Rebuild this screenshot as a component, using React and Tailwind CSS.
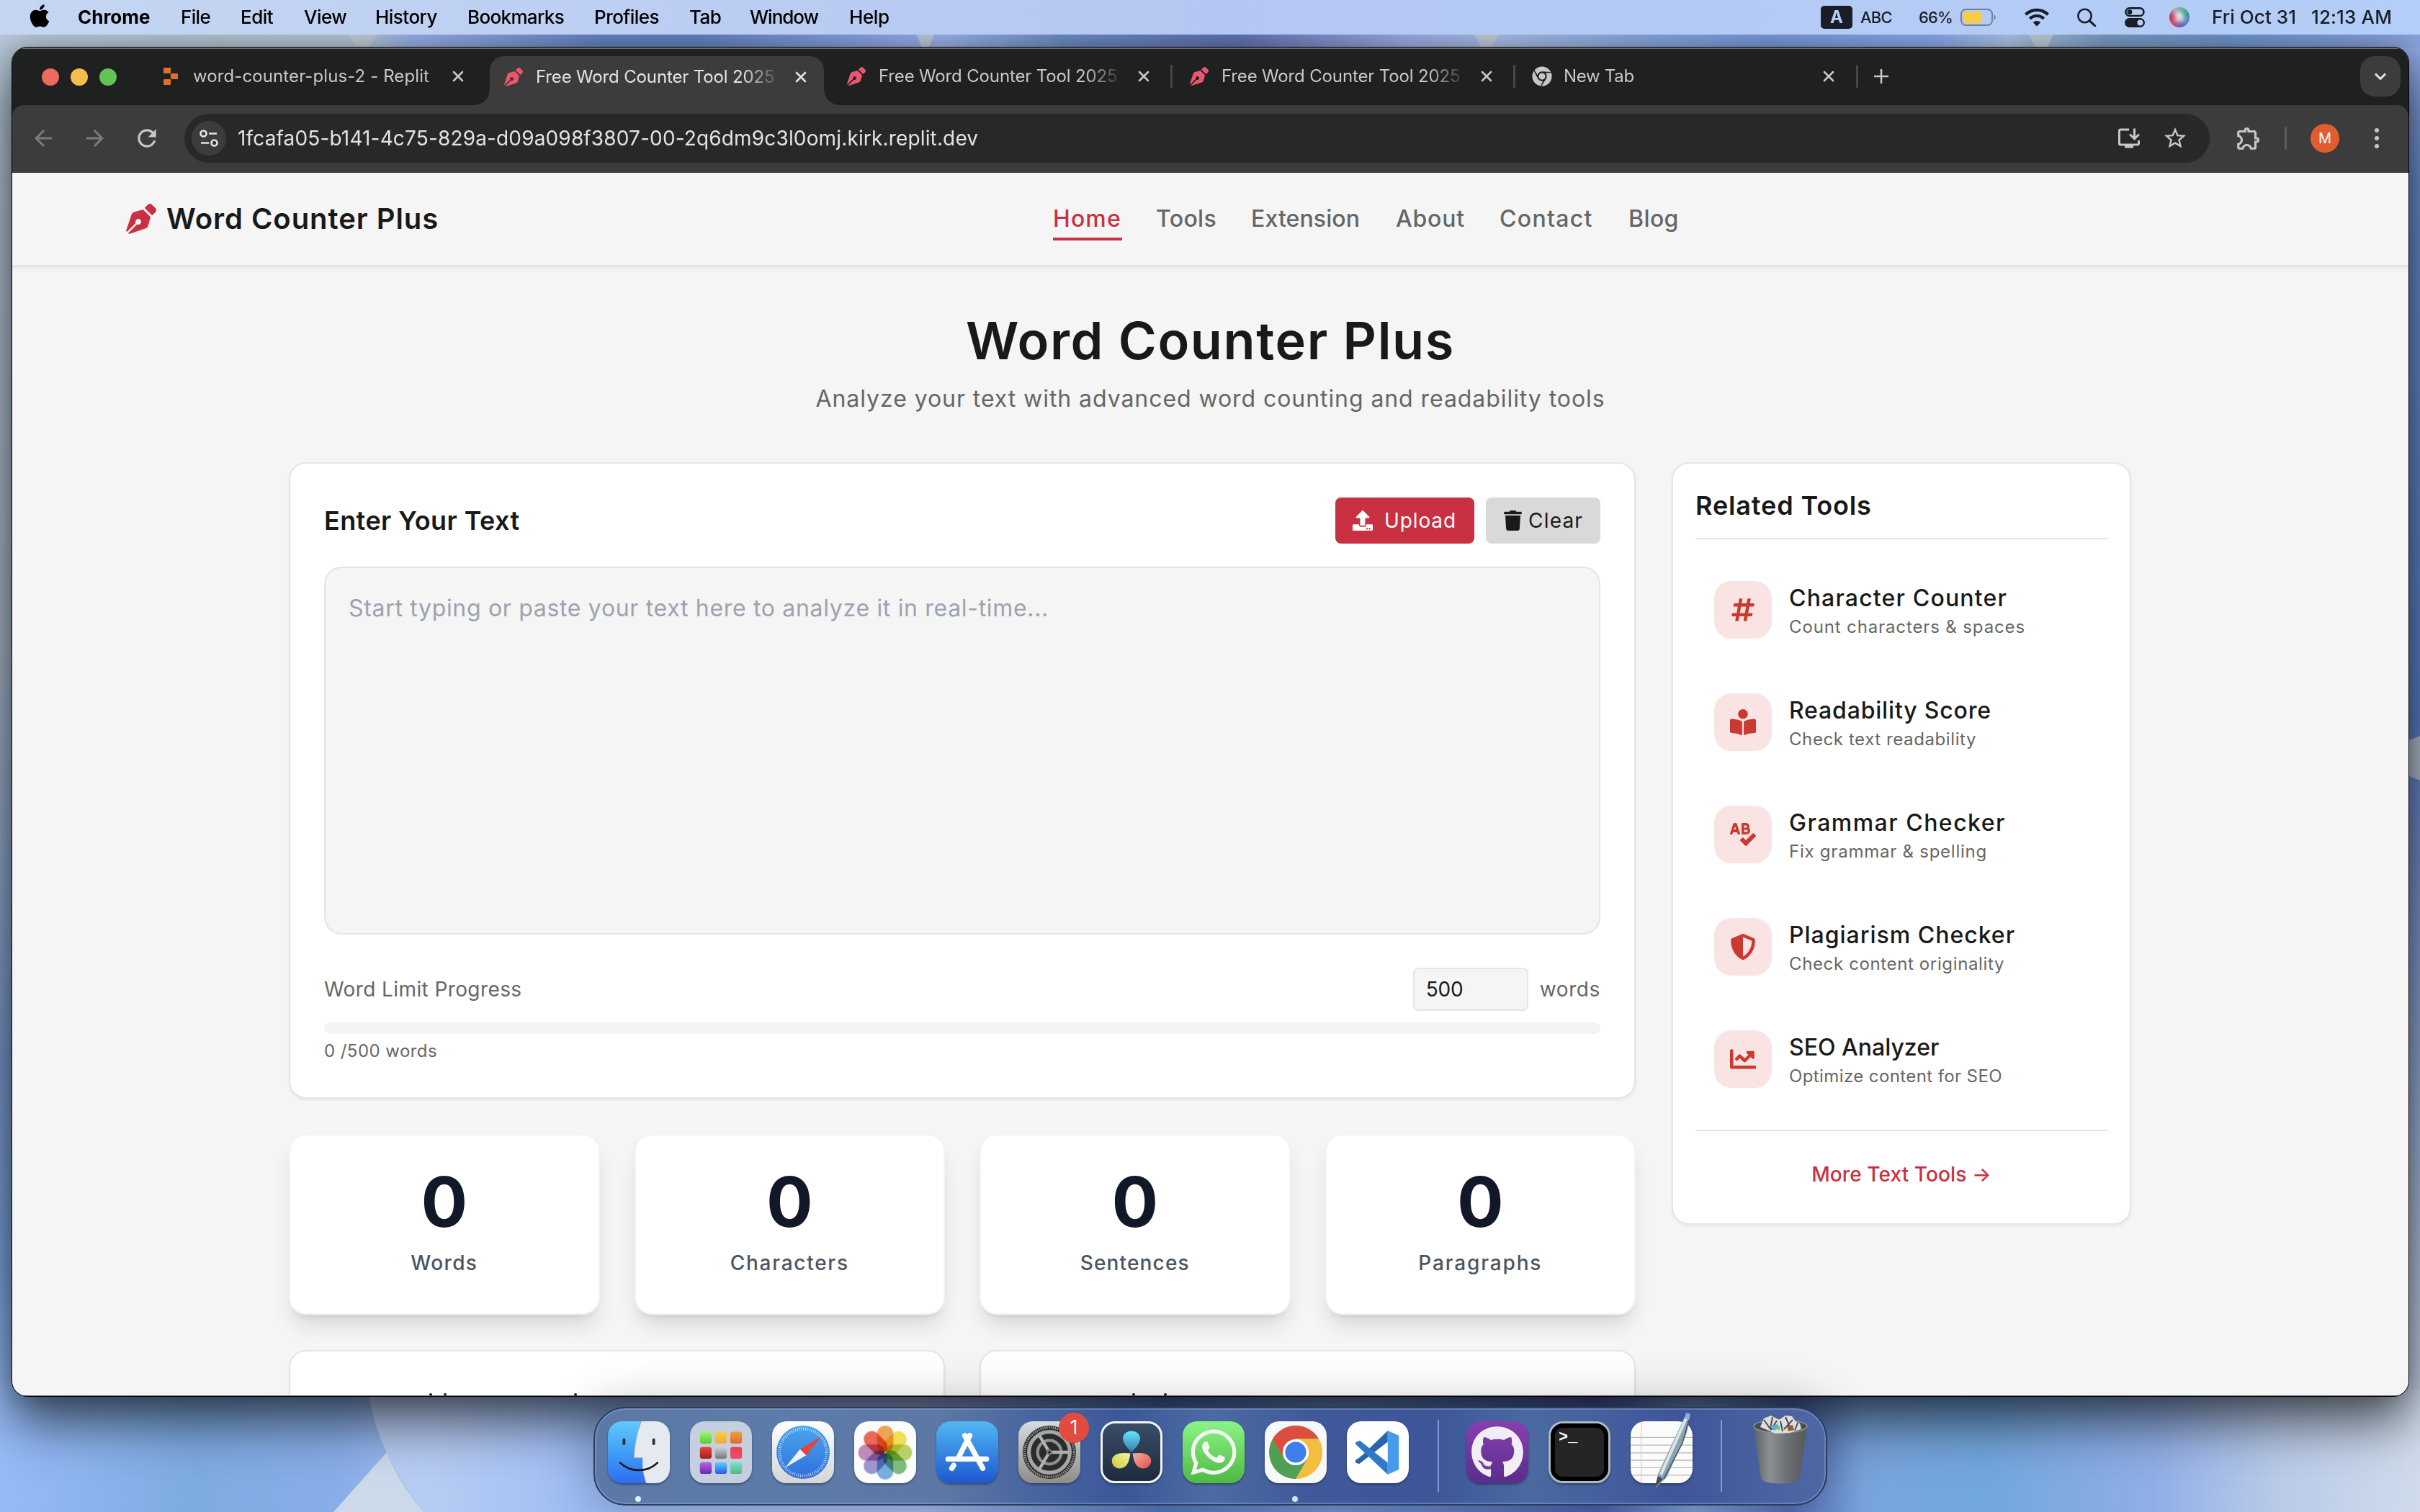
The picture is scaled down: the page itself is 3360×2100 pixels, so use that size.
import React from "react";
import { FaApple, FaBookReader, FaChartLine, FaChrome, FaGithub, FaHashtag, FaPenNib, FaShieldAlt, FaSpellCheck, FaTrash, FaUpload, FaWhatsapp } from "react-icons/fa";
import { MdArrowBack, MdArrowForward, MdOutlineExtension, MdOutlineInstallDesktop, MdRefresh, MdStarBorder } from "react-icons/md";

/* ---------- menu bar ---------- */
const menus = [
  ["Chrome", "w-[143px] font-bold"],
  ["File", "w-[83px] tracking-[-0.68px]"],
  ["Edit", "w-[88px] tracking-[-0.5px]"],
  ["View", "w-[99px] tracking-[-0.5px]"],
  ["History", "w-[128px] tracking-[-0.52px]"],
  ["Bookmarks", "w-[176px] tracking-[-0.65px]"],
  ["Profiles", "w-[132px] tracking-[-0.53px]"],
  ["Tab", "w-[84px] tracking-[-0.6px]"],
  ["Window", "w-[138px] tracking-[-1px]"],
  ["Help", "w-[80px] tracking-[-0.4px]"],
];

function MenuBar() {
  return (
    <header className="relative flex h-12 shrink-0 items-center justify-between bg-linear-to-r from-[#c5d6f2] via-[#b4c7f2] to-[#b3cef7] pl-[38px] pr-9 text-[26px] font-medium text-black">
      <div className="flex items-center pb-[2px]">
        <FaApple className="mb-[2px] mr-[36px] h-9 w-[34px]" />
        {menus.map(([label, cls]) => (
          <span key={label} className={cls + " whitespace-nowrap"}>{label}</span>
        ))}
      </div>
      <div className="flex items-center text-[#191d28]">
        <span className="flex h-8 w-[44px] items-center justify-center rounded-[5px] bg-[#191d28] text-[24px] font-bold text-[#b5cef7]">A</span>
        <span className="ml-[11px] w-[81px] text-[22px] tracking-[-0.73px]">ABC</span>
        <span className="w-[58px] text-[22px] tracking-[-0.86px]">66%</span>
        <svg className="h-6 w-[50px]" viewBox="0 0 50 24" fill="none">
          <rect x="1" y="1" width="43" height="22" rx="6.5" stroke="#6f7f9d" strokeWidth="2" />
          <rect x="4" y="4" width="25" height="16" rx="3.5" fill="#f8cc43" />
          <path d="M46.5 8.5c3 1 3 6 0 7z" fill="#6f7f9d" />
        </svg>
        <svg className="ml-[38px] h-[26px] w-[36px]" viewBox="0 0 36 26" fill="none" stroke="#191d28" strokeWidth="4.2">
          <path d="M2.5 9.2a22 22 0 0 1 31 0" />
          <path d="M8.3 15a13.8 13.8 0 0 1 19.4 0" />
          <path d="M18 25.5l-5.2-5.3a7.4 7.4 0 0 1 10.4 0z" fill="#191d28" stroke="none" />
        </svg>
        <svg className="ml-[37px] h-[26px] w-[28px]" viewBox="0 0 28 26" fill="none" stroke="#191d28" strokeWidth="2.5" strokeLinecap="round">
          <circle cx="11.5" cy="11" r="9.2" />
          <path d="M18.3 17.8l7.4 7" strokeWidth="3" />
        </svg>
        <svg className="ml-[39px] h-7 w-[28px]" viewBox="0 0 28 28" fill="none">
          <rect x="1.4" y="1.4" width="25" height="10.6" rx="5.3" stroke="#191d28" strokeWidth="2.6" />
          <circle cx="7" cy="6.7" r="3.4" fill="#191d28" />
          <rect x="0" y="15" width="28" height="13" rx="6.5" fill="#191d28" />
          <circle cx="21.5" cy="21.5" r="4" fill="#b5cef7" />
        </svg>
        <span className="ml-[34px] flex size-7 items-center justify-center rounded-full bg-[conic-gradient(from_20deg,#59b59b,#3f8f83,#5e7fc9,#6a5aa8,#d2436c,#b23e63,#b9a5b8,#59b59b)]">
          <span className="size-[14px] rounded-full bg-white/80 blur-[3px]" />
        </span>
        <span className="mb-[2px] ml-[31px] w-[138px] tracking-[0.07px]">Fri Oct 31</span>
        <span className="mb-[2px] w-[115px] whitespace-nowrap tracking-[0.14px]">12:13 AM</span>
      </div>
    </header>
  );
}

/* ---------- browser chrome ---------- */
function Close() {
  return (
    <svg className="size-4 shrink-0" viewBox="0 0 16 16" stroke="currentColor" strokeWidth="2.6" strokeLinecap="round">
      <path d="M2 2l12 12M14 2L2 14" />
    </svg>
  );
}

function ReplitMark() {
  return (
    <svg className="h-6 w-5" viewBox="0 0 20 24" fill="#e36e2c">
      <rect x="0" y="0" width="10" height="8" rx="1.2" />
      <rect x="10" y="8" width="10" height="8" rx="1.2" />
      <rect x="0" y="16" width="10" height="8" rx="1.2" />
    </svg>
  );
}

function TabBody({ icon, label, tracking }) {
  return (
    <>
      <span className="flex w-[44px] shrink-0 items-center">{icon}</span>
      <span className={tracking + " w-[334px] shrink-0 overflow-hidden whitespace-nowrap text-[24px]"}>{label}</span>
      <span className="ml-[26px] flex"><Close /></span>
    </>
  );
}

const FADE = "tracking-[-0.15px] [mask-image:linear-gradient(to_right,black_86%,transparent_102%)]";
const nib = <FaPenNib className="size-[26px] text-[#ea5670]" />;

function TabStrip() {
  return (
    <div className="flex h-[78px] shrink-0 bg-[#1f2120] text-[#c6c8c7]">
      <div className="mt-[27px] ml-[41px] flex gap-4">
        <span className="size-6 rounded-full bg-[#ec6a5e]" />
        <span className="size-6 rounded-full bg-[#f4be4f]" />
        <span className="size-6 rounded-full bg-[#61c454]" />
      </div>
      <div className="ml-[65px] flex h-[76px] w-[429px] items-center">
        <span className="flex w-[41px]"><ReplitMark /></span>
        <span className="w-[360px] whitespace-nowrap text-[24px] tracking-[0.1px]">word-counter-plus-2 - Replit</span>
        <Close />
      </div>
      <div className="flex items-end">
        <span className="h-6 w-6 bg-[#3c3c3c]"><span className="block size-6 rounded-br-[22px] bg-[#1f2120]" /></span>
        <div className="flex h-[68px] w-[464px] items-center rounded-t-[20px] bg-[#3c3c3c] pl-5 pb-[10px] text-[#e3e3e3]">
          <TabBody icon={nib} label="Free Word Counter Tool 2025" tracking={FADE} />
        </div>
        <span className="h-6 w-6 bg-[#3c3c3c]"><span className="block size-6 rounded-bl-[22px] bg-[#1f2120]" /></span>
      </div>
      <div className="flex h-[76px] items-center">
        <div className="ml-2 flex w-[449px] items-center"><TabBody icon={nib} label="Free Word Counter Tool 2025" tracking={FADE} /></div>
        <span className="h-8 w-[3px] rounded bg-[#464847]" />
        <div className="ml-6 flex w-[449px] items-center"><TabBody icon={nib} label="Free Word Counter Tool 2025" tracking={FADE} /></div>
        <span className="h-8 w-[3px] rounded bg-[#464847]" />
        <div className="ml-[23px] flex w-[450px] items-center"><TabBody icon={<FaChrome className="size-7" />} label="New Tab" tracking="tracking-[-0.3px]" /></div>
        <span className="h-8 w-[3px] rounded bg-[#464847]" />
        <svg className="ml-[20px] size-6" viewBox="0 0 24 24" stroke="currentColor" strokeWidth="2.6"><path d="M12 2v20M2 12h20" /></svg>
      </div>
      <div className="ml-auto mr-[11px] mt-[10px] flex size-14 items-center justify-center rounded-[20px] bg-[#3c3c3c] text-[#e3e3e3]">
        <svg className="size-5" viewBox="0 0 20 20" fill="none" stroke="currentColor" strokeWidth="3"><path d="M3 6.5l7 7 7-7" /></svg>
      </div>
    </div>
  );
}

function Toolbar() {
  return (
    <div className="shrink-0 bg-[#1f2120]">
      <div className="flex h-[94px] items-center rounded-t-[16px] bg-[#3c3c3c] pb-[2px] pl-[25px] text-[#c7c7c7]">
        <MdArrowBack className="size-9 text-[#7b7b7b]" />
        <MdArrowForward className="ml-[36px] size-9 text-[#7b7b7b]" />
        <MdRefresh className="ml-[35px] size-[38px]" />
        <div className="ml-[33px] flex h-[68px] w-[2812px] items-center rounded-full bg-[#282828] pl-[10px] text-[#e3e3e3]">
          <span className="flex size-12 items-center justify-center rounded-full bg-[#3c3c3c]">
            <svg className="size-7" viewBox="0 0 28 28" fill="none" stroke="currentColor" strokeWidth="2.7">
              <circle cx="6.5" cy="7.5" r="4" /><path d="M14 7.5h11" /><circle cx="21.5" cy="20.5" r="4" /><path d="M3 20.5h11" />
            </svg>
          </span>
          <span className="ml-[16px] text-[28px] tracking-[0.15px]">1fcafa05-b141-4c75-829a-d09a098f3807-00-2q6dm9c3l0omj.kirk.replit.dev</span>
          <MdOutlineInstallDesktop className="ml-auto size-[36px] text-[#c7c7c7]" />
          <MdStarBorder className="ml-[28px] mr-[30px] size-[36px] text-[#c7c7c7]" />
        </div>
        <MdOutlineExtension className="ml-[35px] size-[38px]" />
        <span className="ml-[31px] h-8 w-[3px] rounded bg-[#5c5c5c]" />
        <span className="ml-[33px] flex size-10 items-center justify-center rounded-full bg-[#e25c31] text-[20px] text-white">M</span>
        <span className="ml-[49px] flex flex-col gap-[5px]">
          <span className="size-[6px] rounded-full bg-current" /><span className="size-[6px] rounded-full bg-current" /><span className="size-[6px] rounded-full bg-current" />
        </span>
      </div>
    </div>
  );
}

/* ---------- page ---------- */
const nav = [
  ["Tools", "w-[132px] tracking-[0.33px]"],
  ["Extension", "w-[201px] tracking-[0.1px]"],
  ["About", "w-[144px] tracking-[0.8px]"],
  ["Contact", "w-[179px] tracking-[1.3px]"],
  ["Blog", "tracking-[0.4px]"],
];

const tools = [
  [FaHashtag, "Character Counter", "tracking-[1.17px]", "Count characters & spaces", "tracking-[0.87px]", "h-9 w-[32px]"],
  [FaBookReader, "Readability Score", "tracking-[0.82px]", "Check text readability", "tracking-[0.59px]", "size-9"],
  [FaSpellCheck, "Grammar Checker", "tracking-[1.49px]", "Fix grammar & spelling", "tracking-[0.76px]", "size-9"],
  [FaShieldAlt, "Plagiarism Checker", "tracking-[0.99px]", "Check content originality", "tracking-[0.63px]", "size-9"],
  [FaChartLine, "SEO Analyzer", "tracking-[0px]", "Optimize content for SEO", "tracking-[0.4px]", "size-9"],
];

const stats = [
  ["Words", "tracking-[1.34px]"],
  ["Characters", "tracking-[1.73px]"],
  ["Sentences", "tracking-[1.15px]"],
  ["Paragraphs", "tracking-[1.85px]"],
];

const CARD = "rounded-3xl border-2 border-[#e5e5e5] bg-white shadow-[0_2px_4px_rgba(0,0,0,0.06)]";

function SiteHeader() {
  return (
    <div className="flex h-[131px] shrink-0 items-center border-b-[3px] border-[#e5e5e5] pl-[158px] text-[#191919] shadow-[0_2px_4px_rgba(0,0,0,0.05)]">
      <FaPenNib className="size-[42px] text-[#c93041]" />
      <span className="ml-[14px] w-[1231px] text-[40px] font-semibold tracking-[0.95px]">Word Counter Plus</span>
      <div className="flex items-center text-[32px] font-medium text-[#666]">
        <span className="mr-[47px] mt-[2px] flex h-[58px] w-[96px] items-center border-b-4 border-[#c93041] pt-[2px] tracking-[1.1px] text-[#c93041]">Home</span>
        {nav.map(([l, c]) => <span key={l} className={c}>{l}</span>)}
      </div>
    </div>
  );
}

function Editor() {
  return (
    <section className={CARD + " flex h-[884px] flex-col px-[47px] pt-[47px] text-[#191919]"}>
      <div className="flex h-16 items-center">
        <h2 className="text-[36px] font-semibold leading-none tracking-[0.4px]">Enter Your Text</h2>
        <button className="ml-auto flex h-16 w-[193px] items-center rounded-[8px] bg-[#c93041] pl-6 text-[28px] text-white">
          <FaUpload className="mr-[16px] size-7" /><span className="tracking-[0.88px]">Upload</span>
        </button>
        <button className="ml-4 flex h-16 w-[159px] items-center rounded-[8px] bg-[#d9d9d9] pl-[25px] text-[28px]">
          <FaTrash className="mr-[9px] h-7 w-[25px]" /><span className="tracking-[1.2px]">Clear</span>
        </button>
      </div>
      <div className="mt-8 h-[511px] rounded-3xl border-2 border-[#e5e5e5] bg-[#f5f5f5] px-8 pt-[32px] text-[32px] leading-[48px] tracking-[0.68px] text-[#9ca3af]">
        Start typing or paste your text here to analyze it in real-time...
      </div>
      <div className="mt-[46px] flex h-[60px] items-center text-[28px] text-[#666]">
        <span className="tracking-[0.4px]">Word Limit Progress</span>
        <span className="ml-auto flex h-[60px] w-[160px] items-center rounded-[8px] border-2 border-[#e5e5e5] bg-[#f5f5f5] pl-4 tracking-[-0.3px] text-[#191919]">500</span>
        <span className="ml-[16px] tracking-[0.6px]">words</span>
      </div>
      <div className="mt-4 h-4 rounded-lg bg-[#f4f4f4]" />
      <div className="mt-2 text-[24px] leading-8 tracking-[0.44px] text-[#666]">0 /500 words</div>
    </section>
  );
}

function Stats() {
  return (
    <div className="mt-[49px] grid grid-cols-4 gap-12">
      {stats.map(([l, c]) => (
        <div key={l} className="flex h-[251px] flex-col items-center rounded-3xl border-2 border-[#f3f4f6] bg-white pt-[44px] shadow-[0_20px_30px_-6px_rgba(0,0,0,0.12),0_8px_12px_-8px_rgba(0,0,0,0.12)]">
          <div className="text-[96px] font-bold leading-[96px] text-[#111827]">0</div>
          <div className={c + " mt-[17px] text-[28px] font-medium leading-10 text-[#4b5563]"}>{l}</div>
        </div>
      ))}
    </div>
  );
}

function Related() {
  return (
    <aside className={CARD + " flex h-[1059px] w-[638px] flex-col px-[31px] pt-[30px] text-[#191919]"}>
      <h2 className="h-[75px] border-b-2 border-[#e5e5e5] text-[36px] font-semibold leading-[56px] tracking-[0.85px]">Related Tools</h2>
      <div className="mt-[34px] flex flex-col gap-7">
        {tools.map(([Icon, title, tc, sub, sc, ic]) => (
          <div key={title} className="flex h-32 items-center pl-[26px]">
            <span className="flex size-20 items-center justify-center rounded-3xl bg-[#fae3e3] text-[#cb3a30]"><Icon className={ic} /></span>
            <div className="ml-6 pt-[3px]">
              <div className={tc + " text-[32px] font-medium leading-[44px]"}>{title}</div>
              <div className={sc + " text-[24px] leading-9 text-[#666]"}>{sub}</div>
            </div>
          </div>
        ))}
      </div>
      <div className="mt-[34px] border-t-2 border-[#e5e5e5] pt-[40px] text-center text-[28px] font-medium leading-10 tracking-[0.1px] text-[#c93041]">More Text Tools →</div>
    </aside>
  );
}

function Page() {
  return (
    <div className="flex h-[1698px] flex-col overflow-hidden bg-[#f5f5f5]">
      <SiteHeader />
      <div className="mt-[57px] flex flex-col items-center">
        <h1 className="text-[72px] font-semibold leading-[90px] tracking-[1.6px] text-[#191919]">Word Counter Plus</h1>
        <p className="mt-[12px] text-[32px] leading-[48px] tracking-[0.93px] text-[#666]">Analyze your text with advanced word counting and readability tools</p>
      </div>
      <div className="ml-[384px] mt-[64px] flex items-start gap-[50px]">
        <div className="w-[1870px]">
          <Editor />
          <Stats />
          <div className="mt-[49px] grid grid-cols-2 gap-12">
            <div className={CARD + " flex h-[200px] pt-[58px]"}>
              <span className="ml-[193px] h-1 w-1 rounded-full bg-[#191919]" />
              <span className="ml-[16px] h-1 w-1 rounded-full bg-[#191919]" />
              <span className="ml-[177px] h-1 w-1 rounded-full bg-[#191919]" />
            </div>
            <div className={CARD + " flex h-[200px] pt-[58px]"}>
              <span className="ml-[210px] h-1 w-1 rounded-full bg-[#191919]" />
              <span className="ml-[40px] h-1 w-1 rounded-full bg-[#191919]" />
            </div>
          </div>
        </div>
        <Related />
      </div>
    </div>
  );
}

/* ---------- dock ---------- */
const petals = ["#f0973a", "#f2dc3a", "#aecf4c", "#6cb26b", "#62a3d9", "#8f86c9", "#b878b4", "#e8503f"];
const grid9 = [
  ["#a5f36b", "#56cc3c"], ["#f9cf46", "#f3a83a"], ["#f1a03c", "#dd6d2b"],
  ["#e8443a", "#a41f19"], ["#c9d3dd", "#777"], ["#ee3e58", "#e65169"],
  ["#b566e6", "#6b2aa8"], ["#5fd2fb", "#2659e6"], ["#7fe0d0", "#4fb98c"],
];

function Tile({ className = "", children }) {
  return <div className={className + " relative size-[86px] shrink-0 overflow-hidden rounded-[20px] shadow-[0_2px_3px_rgba(0,0,0,0.35)]"}>{children}</div>;
}

function Finder() {
  return (
    <Tile className="bg-linear-to-b from-[#5fcbfa] to-[#2f6cf0]">
      <svg viewBox="0 0 100 100" className="size-full">
        <path d="M54 0C46 20 43 40 42 59h14c-1 15 1 28 6 41h38V0z" fill="#e5e9f0" />
        <path d="M54 0C46 20 43 40 42 59h14c-1 15 1 28 6 41" fill="none" stroke="#8fa6c4" strokeWidth="1" />
        <path d="M26 30v6M74 30v6" stroke="#2b2f36" strokeWidth="4.5" strokeLinecap="round" />
        <path d="M20 67c16 16 44 16 60 0" stroke="#16181c" strokeWidth="3.2" fill="none" strokeLinecap="round" />
      </svg>
    </Tile>
  );
}

function Launchpad() {
  return (
    <Tile className="bg-[#c6cfde]">
      <svg viewBox="0 0 100 100" className="size-full">
        <defs>
          {grid9.map(([a, b], i) => (
            <linearGradient key={i} id={"g9" + i} x2="0" y2="1"><stop stopColor={a} /><stop offset="1" stopColor={b} /></linearGradient>
          ))}
        </defs>
        {grid9.map((_, i) => (
          <rect key={i} x={16 + (i % 3) * 24.5} y={17 + Math.floor(i / 3) * 24.5} width="19" height="19" rx="4" fill={`url(#g9${i})`} />
        ))}
      </svg>
    </Tile>
  );
}

function Safari() {
  return (
    <Tile className="bg-linear-to-b from-white to-[#d5d5d5]">
      <svg viewBox="0 0 100 100" className="size-full">
        <defs><linearGradient id="saf" x2="0" y2="1"><stop stopColor="#4aa5ee" /><stop offset="1" stopColor="#2f6fdc" /></linearGradient></defs>
        <circle cx="50" cy="50" r="43" fill="url(#saf)" />
        <circle cx="50" cy="50" r="38" fill="none" stroke="#dcebfb" strokeWidth="5" strokeDasharray="0.9 2.42" />
        <path d="M80 24L55 55 45 45z" fill="#e2453b" />
        <path d="M21 75L45 45l10 10z" fill="#eef1f6" />
      </svg>
    </Tile>
  );
}

function Photos() {
  return (
    <Tile className="bg-[#fcfcfc]">
      <svg viewBox="0 0 100 100" className="size-full">
        {petals.map((c, i) => (
          <rect key={c} x="37" y="7" width="26" height="43" rx="13" fill={c} opacity="0.86" transform={`rotate(${i * 45} 50 50.5)`} className="mix-blend-multiply" />
        ))}
      </svg>
    </Tile>
  );
}

function AppStore() {
  return (
    <Tile className="bg-linear-to-b from-[#53b6f0] to-[#2256d0]">
      <svg viewBox="0 0 100 100" className="size-full" stroke="#fbfdff" strokeWidth="8.5" strokeLinecap="round">
        <path d="M54 23L35 60M46 23l29 53M19 61h62M28 71l-3 5" />
      </svg>
    </Tile>
  );
}

function Settings() {
  return (
    <div className="relative">
      <Tile className="bg-linear-to-b from-[#d5dde1] to-[#8f8d8a]">
        <svg viewBox="0 0 100 100" className="size-full" fill="none">
          <circle cx="50" cy="50" r="43" fill="#2a2b2b" />
          <circle cx="50" cy="50" r="40" stroke="#9b9d9d" strokeWidth="4" strokeDasharray="1.7 1.7" />
          <circle cx="50" cy="50" r="33" stroke="#a5a7a7" strokeWidth="6" />
          <circle cx="50" cy="50" r="19" stroke="#8f9191" strokeWidth="5" />
          <path d="M50 50h32M50 50L34 23M50 50L34 77" stroke="#b0b2b2" strokeWidth="5" />
          <circle cx="50" cy="50" r="5" fill="#777" /><circle cx="50" cy="50" r="2" fill="#222" />
        </svg>
      </Tile>
      <span className="absolute -top-3 left-[56px] flex size-[42px] items-center justify-center rounded-full bg-[#e24b3f] text-[27px] text-white">1</span>
    </div>
  );
}

function Resolve() {
  return (
    <Tile className="border-[3px] border-[#f2f4f5] bg-linear-to-b from-[#3a4d68] to-[#1e2b3c]">
      <svg viewBox="0 0 100 100" className="size-full">
        <defs>
          <linearGradient id="ra" x2="0" y2="1"><stop stopColor="#5fe9fd" /><stop offset="1" stopColor="#3c78ae" /></linearGradient>
          <linearGradient id="rb" x1="1" x2="0" y2="1"><stop stopColor="#f7f6a4" /><stop offset="1" stopColor="#c9cb38" /></linearGradient>
          <linearGradient id="rc" x2="1" y2="1"><stop stopColor="#f8b0a0" /><stop offset="1" stopColor="#df4d4a" /></linearGradient>
        </defs>
        <path d="M50 50C38 38 35 31 35 26a15 13 0 0 1 30 0c0 5-3 12-15 24z" fill="url(#ra)" />
        <path d="M48 52c-2 18-8 26-18 26a13 13 0 0 1-14-13c0-11 12-16 32-13z" fill="url(#rb)" />
        <path d="M52 52c2 18 8 26 18 26a13 13 0 0 0 14-13c0-11-12-16-32-13z" fill="url(#rc)" />
      </svg>
    </Tile>
  );
}

function ChromeIcon() {
  return (
    <Tile className="bg-[#f6f8fb]">
      <svg viewBox="0 0 100 100" className="size-full">
        <circle cx="50" cy="50" r="43" fill="#f3bd42" />
        <path d="M50 50L12.8 28.5A43 43 0 0 1 87.2 28.5H50z" fill="#db4e3f" />
        <path d="M50 28.5h37.2A43 43 0 0 1 50 93L68.6 60.7z" fill="#f3bd42" />
        <path d="M12.8 28.5A43 43 0 0 0 50 93l18.6-32.3L50 50 31.4 60.7z" fill="#4f9f55" />
        <path d="M12.8 28.5L31.4 60.7 50 50V28.5z" fill="#db4e3f" />
        <circle cx="50" cy="50" r="21" fill="#fff" /><circle cx="50" cy="50" r="17" fill="#3f7fe8" />
      </svg>
    </Tile>
  );
}

function Code() {
  return (
    <Tile className="bg-white">
      <svg viewBox="0 0 100 100" className="size-full">
        <path d="M66 15L27 53l-10 8-3 1v5l6 2 46-36z" fill="#2766ab" />
        <path d="M66 86L14 37v-3l7-3 45 36z" fill="#3079c6" />
        <path d="M66 15l18 8v55l-18 8z" fill="#479bea" />
      </svg>
    </Tile>
  );
}

function Notes() {
  return (
    <div className="relative">
      <Tile className="bg-[#fbfbfa]">
        <svg viewBox="0 0 100 100" className="size-full">
          <path d="M0 26h100M0 38.5h100M0 51h100M0 63h100M0 75h100M0 87h100" stroke="#b9b9b9" strokeWidth="1.4" />
          <path d="M17 0v100" stroke="#efc3c0" strokeWidth="1.3" />
        </svg>
      </Tile>
      <svg className="absolute -top-3 left-[28px] h-[106px] w-[60px]" viewBox="0 0 60 106">
        <path d="M48 4l6 2-4 22-28 62-16 15 4-20z" fill="#8fa4b3" />
        <path d="M49 8L14 86" stroke="#dbe7ee" strokeWidth="4" />
        <path d="M53 10L44 42 18 92" stroke="#3f5261" strokeWidth="1.6" fill="none" />
        <path d="M10 88L5 105l12-13z" fill="#4a4a4a" />
        <path d="M49 0l6 2-2 8-6-2z" fill="#86b3cf" />
      </svg>
    </div>
  );
}

function Trash() {
  return (
    <svg className="h-[100px] w-[76px] shrink-0" viewBox="0 0 76 100">
      <defs>
        <linearGradient id="tr" x2="1"><stop stopColor="#5d6163" /><stop offset="0.3" stopColor="#8d9193" /><stop offset="0.6" stopColor="#6e7274" /><stop offset="1" stopColor="#56595b" /></linearGradient>
      </defs>
      <path d="M1 17l10 72c1 10 53 10 54 0l10-72z" fill="url(#tr)" />
      <ellipse cx="38" cy="17" rx="37" ry="9" fill="#4a4d4f" stroke="#94989a" strokeWidth="1.5" />
      <path d="M10 18l5-12 10-4 11 6 9-6 9 1 5 7 6 3 2 8-16 5-20 1z" fill="#dedede" />
      <path d="M15 8l10 14M27 4l-3 16M33 9l-8 13M45 4l7 16M55 8l-12 13M62 12l-4 11M38 10l3 14" stroke="#4d4d4d" strokeWidth="2" />
      <path d="M24 17l10-3 3 5-8 4z" fill="#4fb7cf" /><path d="M47 17l8-2 2 7-8 2z" fill="#9a5b3d" /><path d="M31 19l7-2-2 6z" fill="#7cc15a" />
    </svg>
  );
}

function Dock() {
  return (
    <div className="absolute left-[824px] top-[1954px] flex h-[137px] w-[1713px] items-start rounded-[44px] border-2 border-[#2b3b5c] bg-[linear-gradient(90deg,#5c78a6_0%,#5c7ba9_14%,#5d78a5_28%,#48649f_36%,#3b5799_43%,#4c6ba3_50%,#41599b_58%,#3d5699_68%,#4a69a1_76%,#40559b_88%,#4f68a4_100%)] shadow-[inset_0_0_0_2px_rgba(160,185,225,0.35),0_0_70px_rgba(0,0,0,0.28)]">
      <div className="mt-[18px] flex items-start gap-[28px] pl-[18px]">
        <Finder /><Launchpad /><Safari /><Photos /><AppStore /><Settings /><Resolve />
        <Tile className="flex items-center justify-center bg-linear-to-b from-[#8af585] to-[#50b944]"><FaWhatsapp className="size-[72px] text-[#f4f6f4]" /></Tile>
        <ChromeIcon /><Code />
      </div>
      <span className="ml-[40px] mt-[16px] h-[100px] w-[2px] bg-[#8299d4]" />
      <div className="ml-[38px] mt-[18px] flex items-start gap-[28px]">
        <Tile className="flex items-center justify-center bg-linear-to-b from-[#8840ae] to-[#5a2d8c]"><FaGithub className="size-[74px] text-[#f1eef5]" /></Tile>
        <Tile className="border-[3px] border-[#a9bcc6] bg-[#252525]">
          <div className="size-full rounded-[17px] border-[6px] border-black pl-[5px] pt-[2px] font-['Liberation_Mono'] text-[22px] font-bold leading-6 text-white">&gt;_</div>
        </Tile>
        <Notes />
      </div>
      <span className="ml-[39px] mt-[16px] h-[100px] w-[2px] bg-[#8299d4]" />
      <span className="ml-[43px] mt-[8px]"><Trash /></span>
      <span className="absolute left-[56px] top-[122px] size-2 rounded-full bg-[#d6f3fb]" />
      <span className="absolute left-[968px] top-[122px] size-2 rounded-full bg-[#c8e8fb]" />
    </div>
  );
}

/* Abstract blue desktop picture; only its rim shows round the window. */
function Wallpaper() {
  return (
    <div className="absolute inset-0 flex flex-col">
      <div className="h-[66px] shrink-0 bg-[linear-gradient(90deg,#b9c8dc_0%,#b3c5d2_9%,#b4c6d6_15%,#98b0ea_17%,#6484bf_25%,#6484bf_29%,#90a8e6_37%,#9ab3ea_39%,#6c8cc4_44%,#6072b2_51%,#9aabe4_58%,#a8bfe6_62%,#88a8e0_68%,#7899dc_73%,#8aa8ea_80%,#abc4e4_83%,#7b9cc4_87%,#6e94ca_92%,#8aa3de_100%)]" />
      <div className="flex flex-1 justify-between">
        <div className="w-10 bg-[linear-gradient(180deg,#b5c6d8_0%,#a8b8ca_45%,#7c9cd0_75%,#7da4dc_90%,#96bbf7_100%)]" />
        <div className="w-10 bg-[linear-gradient(180deg,#90a8e4_0%,#6c90d0_10%,#5a80c8_50%,#7c90cc_62%,#a8bcdc_85%,#c9d7ea_100%)]" />
      </div>
      <div className="h-[170px] shrink-0 bg-[linear-gradient(90deg,#96bbf7_0%,#7eabe2_8%,#88ade8_14%,#a4bff2_18%,#9abaf3_24%,#a5baf0_38%,#5278bf_48%,#7094d4_55%,#4c62b0_66%,#7da0dc_70%,#5570b8_74%,#78a4dc_77%,#72a6de_82%,#90aee6_89%,#b8cae8_94%,#d0dcec_100%)]" />
      <svg className="absolute inset-0 h-[2100px] w-[3360px]" viewBox="0 0 3360 2100">
        <defs>
          <linearGradient id="fold"><stop stopColor="#c6d6f4" stopOpacity="0.75" /><stop offset="1" stopColor="#c6d6f4" stopOpacity="0" /></linearGradient>
        </defs>
        <path d="M481 44h46l-16 24h-14zM1271 44h28l-10 24h-8zM2045 44h38l-12 24h-14zM2815 44h38l-12 24h-14z" fill="#c3cdd6" opacity="0.85" />
        <path d="M511 1925q4 46 26 92 20 44 51 83h250v-175z" fill="url(#fold)" />
        <path d="M537 2017l-74 83h125q-34-40-51-83z" fill="#ccd9ea" />
        <path d="M3340 1030l20-8v62l-20-8z" fill="#b3bfd0" />
      </svg>
    </div>
  );
}

export default function App() {
  return (
    <div className="relative h-[2100px] w-[3360px] overflow-hidden font-['Inter',sans-serif]">
      <Wallpaper />
      <div className="absolute left-4 top-[65px] flex h-[1875px] w-[3329px] flex-col overflow-hidden rounded-[22px] border border-black bg-[#6b6d6c] pt-[2px] shadow-[0_36px_70px_rgba(0,0,0,0.62),0_0_36px_rgba(0,0,0,0.22)]">
        <TabStrip />
        <Toolbar />
        <Page />
      </div>
      <MenuBar />
      <Dock />
    </div>
  );
}
